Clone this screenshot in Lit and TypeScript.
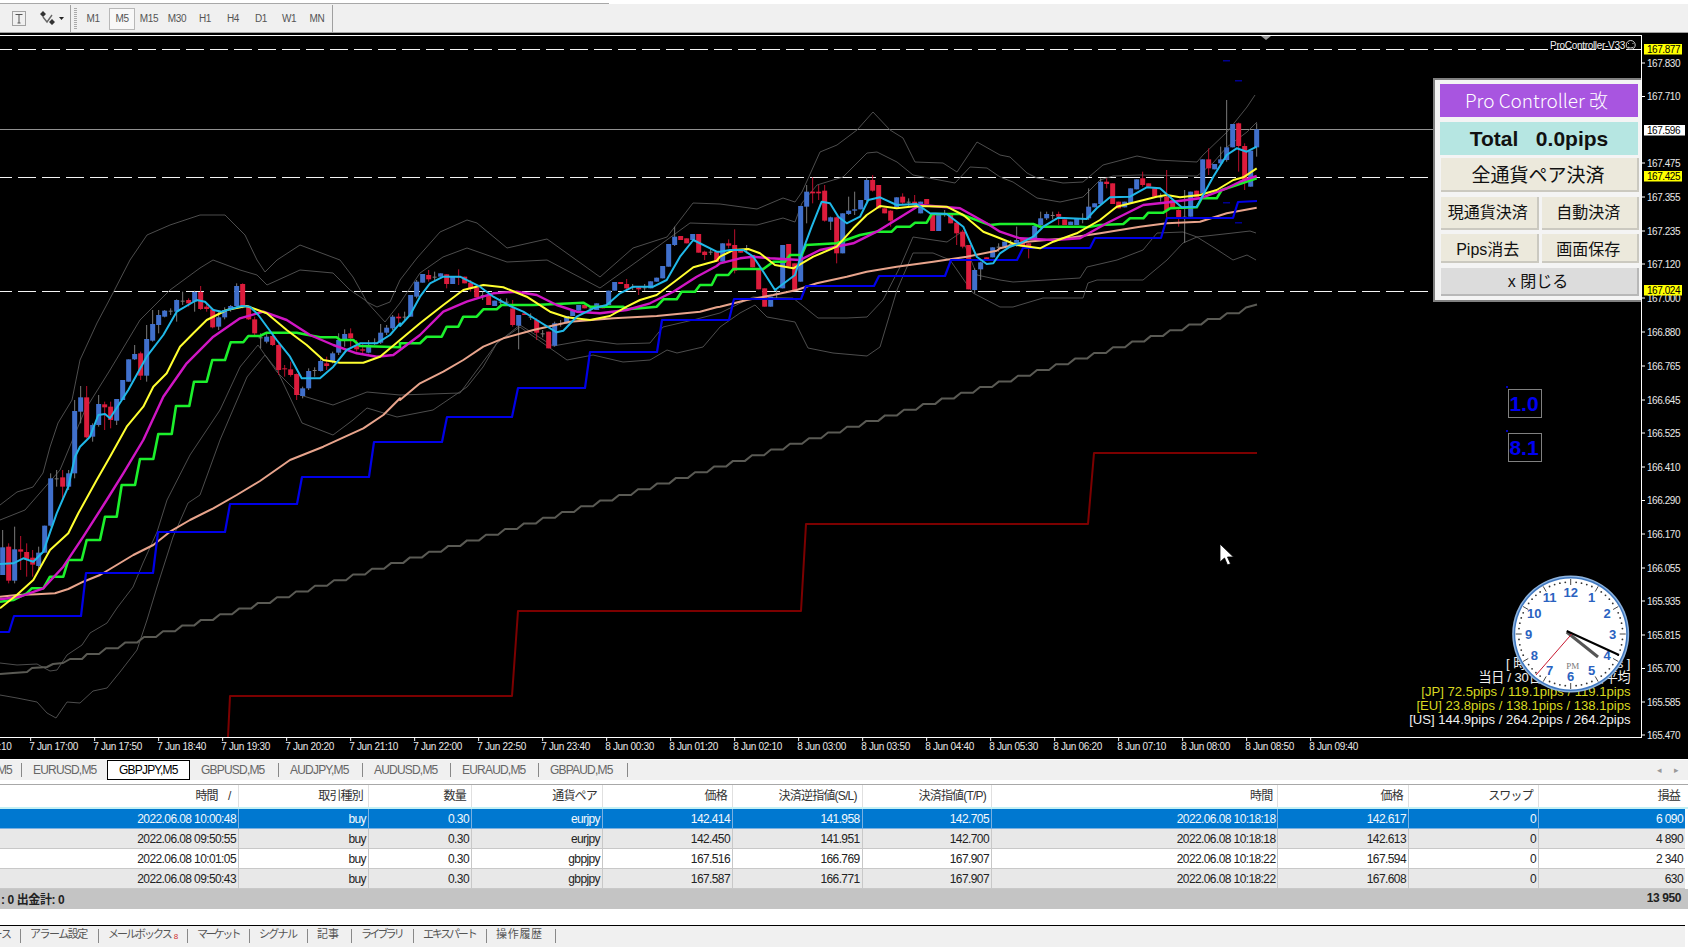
import { LitElement, html, svg, css } from 'lit';
import { customElement } from 'lit/decorators.js';

// zoom crops were read at 3x, these turn those readings back into page pixels
const ORIGINS: Record<string, [number, number, number, number]> = {
  a: [0, 260, 0, 400],
  e: [0, 480, 0, 400],
  b: [400, 180, 400, 720],
  c: [720, 100, 720, 1000],
  d: [1000, 90, 1000, 1300],
};

const seg = (key: string, s: string) => {
  const [ox, oy, min, max] = ORIGINS[key];
  return s
    .trim()
    .split(/\s+/)
    .map((p) => {
      const [x, y] = p.split(',').map(Number);
      return [ox + x / 3, oy + y / 3];
    })
    .filter(([x]) => x >= min && x <= max);
};

const pts = (list: number[][]) => list.map(([x, y]) => `${x.toFixed(1)},${y.toFixed(1)}`).join(' ');
const abs = (s: string) => s.trim().split(/\s+/).map((p) => p.split(',').map(Number));

const CYAN = [
  ...seg('a', '0,912 40,910 70,895 100,905 130,875 170,760 205,680 225,590 240,560 270,530 295,465 315,462 330,475 385,390 440,290 490,225 530,155 590,120 615,125 640,150 665,155 700,145 725,138 750,140 775,165 830,240 870,290 905,355 960,355 1000,320 1040,270 1080,250 1130,250 1170,225 1200,190'),
  ...seg('b', '0,438 30,405 60,350 90,310 130,290 180,290 240,320 280,350 330,378 370,395 410,420 470,457 490,452 530,410 580,385 620,375 660,340 700,320 760,320 800,300 840,230 880,180 950,215'),
  ...seg('c', '0,455 30,450 70,450 100,470 130,515 165,570 225,525 245,460 275,380 305,305 330,310 355,350 380,370 420,350 445,300 480,292 530,315 590,312 630,340 680,342 730,380 770,470 800,492 820,490'),
  ...seg('d', '0,490 30,470 60,460 100,440 130,410 175,383 260,387 290,355 330,322 390,320 440,292 480,295 520,330 545,352 590,350 640,260 680,195 710,175 740,185 770,170'),
];
const YELLOW = [
  ...seg('a', '0,1045 50,1005 100,960 150,870 205,820 235,760 290,660 330,590 380,500 430,440 460,380 500,340 540,260 580,220 620,180 680,150 740,138 800,160 860,210 920,255 970,300 1020,308 1090,308 1140,290 1200,240'),
  ...seg('b', '0,480 60,430 130,375 190,330 250,315 310,322 380,350 450,395 500,412 570,420 630,408 680,380 720,360 770,345 830,300 880,262 950,242'),
  ...seg('c', '0,470 40,450 85,447 120,460 165,495 220,505 280,470 350,440 400,385 440,345 480,318 530,325 590,318 680,320 730,345 790,395'),
  ...seg('d', '0,445 50,465 120,475 160,455 230,430 300,390 350,350 410,335 470,320 500,315 540,322 600,315 650,300 700,270 730,262 770,235'),
];
const MAGENTA = [
  ...seg('a', '0,1018 60,1010 130,985 190,920 250,830 320,720 370,640 430,540 490,410 560,310 640,230 720,175 790,155 860,180 930,225 1000,255 1070,280 1130,290 1180,285'),
  ...seg('b', '0,510 60,465 130,395 200,365 280,340 350,335 410,345 470,375 530,395 600,400 680,390 750,370 820,335 890,290 950,258'),
  ...seg('c', '0,490 60,475 100,470 150,475 240,480 300,450 400,430 470,395 600,315 720,325 800,370'),
  ...seg('d', '0,425 60,445 160,450 240,445 320,400 430,345 520,335 600,325 680,295 720,275 770,258'),
];
const GREEN = [
  ...seg('a', '0,1025 40,1020 80,1000 95,985 130,985 150,950 190,950 205,900 245,900 260,840 300,840 315,770 350,770 365,675 405,675 420,597 460,597 475,522 515,522 528,438 568,438 582,365 620,365 637,300 675,300 692,247 730,247 745,228 780,228 800,218 890,218 960,232 1010,232 1020,240 1060,240 1080,258 1200,262'),
  ...seg('b', '0,490 60,490 80,470 125,470 140,440 175,440 190,410 230,410 250,388 290,388 305,375 400,375 470,372 550,368 570,380 670,380 680,388 720,385 770,380 790,358 830,358 845,335 885,335 900,315 935,315 950,285'),
  ...seg('c', '0,525 25,525 40,507 130,507 160,485 195,485 210,465 245,465 258,435 350,430 420,405 470,395 515,395 530,380 570,380 585,368 620,368 635,342 720,342 810,375'),
  ...seg('d', '0,402 100,402 120,410 240,410 260,412 300,405 370,402 390,385 430,385 445,368 490,368 510,355 590,352 605,325 650,325 665,300 710,285 770,265'),
];
const SALMON = [
  ...seg('e', '0,350 50,345 110,343 165,340 205,327 250,305 300,285 350,255 400,225 460,195 510,155 570,120 640,85 710,45 780,3'),
  ...seg('a', '870,600 970,560 1090,505 1150,465 1200,415'),
  ...seg('b', '0,660 60,610 130,575 190,540 250,500 310,475 400,450 510,425 640,415 770,408 900,395 950,382'),
  ...seg('c', '0,620 80,600 160,585 230,570 290,550 380,530 440,515 530,500 640,485 740,470 830,452'),
  ...seg('d', '0,475 80,455 200,445 300,430 420,410 500,400 600,395 680,370 770,353'),
];
const BLUE = abs('0,632 9,632 14,616 81,616 86,573 153,573 158,532 225,532 230,504 297,504 302,477 369,477 374,442 442,442 447,417 512,417 518,388 585,388 590,352 657,352 662,320 729,320 734,299 801,299 806,286 874,286 879,276 945,276 951,260 1017,260 1023,248 1090,248 1095,238 1161,238 1167,218 1233,218 1238,202 1257,201');
const DARKRED = abs('228,737 230,696 512,696 518,611 801,611 806,524 1088,524 1094,453 1257,453');

const BANDS = [
  abs('0,505 17,492 33,487 43,473 50,447 58,423 72,400 80,360 97,323 113,293 130,260 147,235 170,225 200,215 225,215 245,235 257,260 265,272 277,260 300,245 340,260 353,277 367,302 377,307 390,302 400,280 417,258 440,232 467,220 477,223 507,248 547,239 600,277 633,248 667,237 693,203 720,204 757,209 783,198 795,202 802,192 820,152 837,145 857,130 873,112 890,130 903,138 915,162 943,163 957,172 977,142 1000,155 1010,157 1027,173 1037,178 1063,183 1083,182 1103,165 1137,156 1157,160 1197,162 1203,155 1227,132 1247,107 1255,95'),
  abs('0,520 25,510 60,470 85,410 110,370 140,320 170,290 200,268 213,260 240,270 257,275 267,285 300,270 333,273 350,290 365,300 385,322 400,303 420,273 443,257 467,248 507,262 547,260 600,288 653,250 690,223 720,224 757,225 783,218 795,222 802,203 817,185 843,177 867,153 877,152 897,162 913,175 955,183 970,167 987,168 1000,177 1013,182 1037,198 1060,202 1083,197 1100,180 1113,176 1140,175 1197,176 1213,163 1227,147 1247,132 1257,122'),
  abs('0,663 17,665 37,664 50,671 57,670 67,655 82,645 90,633 107,623 117,608 133,587 143,563 157,532 167,500 190,455 220,410 240,367 258,345 277,372 300,395 333,405 367,392 400,395 460,393 497,343 520,325 553,346 587,340 617,344 650,343 663,327 693,320 720,313 753,297 793,298 818,318 847,318 867,317 883,300 900,267 913,237 947,242 960,233 977,275 1000,280 1013,282 1080,278 1087,267 1117,260 1143,250 1157,233 1183,232 1197,237 1233,233 1250,231 1256,233'),
  abs('0,695 17,698 37,702 47,713 56,718 67,702 80,703 93,691 107,688 120,672 137,650 147,620 157,587 173,537 188,503 200,495 220,440 247,377 265,355 277,370 302,423 333,435 353,420 367,408 397,417 433,410 467,387 483,367 497,343 520,327 567,360 593,355 623,362 650,360 667,350 677,353 703,347 720,327 740,313 755,305 767,317 795,322 808,348 833,353 867,356 880,347 897,290 913,253 933,253 950,260 973,293 1000,307 1013,307 1043,298 1083,298 1088,283 1097,280 1143,280 1167,260 1183,243 1197,237 1213,247 1233,260 1247,255 1256,260'),
];

// long moving average, drawn as a slanted staircase
const stairs = () => {
  const out = abs('0,674 13,673 27,672 32,668 47,667 53,664 63,663 70,659 82,659');
  let x = 87;
  let y = 654;
  while (x < 1238) {
    out.push([x, y], [x + 12, y], [x + 19, y - 5.68]);
    x += 19;
    y -= 5.68;
  }
  out.push([1257, y - 3]);
  return out;
};

const CANDLES: Record<string, string> = {
  a: '8 B 862 945 810 945;26 R 860 962 850 970;44 B 868 962 800 970;62 R 868 875 828 930;80 R 876 898 850 950;98 R 893 914 870 950;116 B 878 918 860 930;134 B 797 878;152 B 655 797 640 800;170 D 655 655 630 680;188 R 652 680 630 720;206 B 640 680 630 690;224 B 453 640 420 655;242 B 412 455 378 490;260 R 412 532 378 535;278 B 495 530 490 545;296 B 432 495 405 500;314 R 433 442 425 510;332 R 440 480 425 505;350 B 417 482 417 495;368 B 360 420;386 B 298 365;404 B 282 298 255 300;422 R 280 347 275 360;440 B 237 347 195 365;458 B 192 242 150 245;476 B 165 195 150 220;494 B 152 170 150 172;512 D 152 152 145 165;530 B 120 155 118 185;548 D 122 122 95 135;566 R 120 130 115 140;584 B 96 125 92 155;602 R 96 147 78 150;620 R 140 147 130 155;638 R 148 202 145 205;656 B 172 200 150 210;674 B 150 172 142 178;692 B 138 150 135 155;710 B 78 138 70 140;728 R 72 140 70 145;746 R 140 178 135 180;764 R 178 220 170 225;782 D 232 232 220 265;800 B 230 245 222 250;818 R 228 255 222 258;836 R 255 330 250 345;854 R 325 328 315 350;872 R 328 345 305 350;890 R 342 405 340 420;908 B 385 408 380 415;926 B 333 385 325 390;944 D 330 330 322 350;962 B 303 333 295 335;980 R 310 318 290 330;998 B 280 303 275 310;1016 B 240 278 220 285;1034 B 222 240 208 260;1052 R 220 235 205 260;1070 R 258 268 240 275;1088 R 268 272 250 285;1106 B 255 278 240 280;1124 D 248 248 235 255;1142 B 218 248 192 252;1160 B 203 218 195 225;1178 B 170 205 165 210;1196 R 170 175 160 190',
  b: '14 D 410 410 395 420;32 B 345 410;50 B 305 350 300 355;68 B 282 308;86 R 285 298 270 305;104 D 290 290 275 300;122 B 280 290;140 R 283 312 283 325;158 B 290 312;176 R 290 292 268 315;194 R 290 310;212 R 308 325 300 335;230 R 322 352;248 D 345 345 335 360;266 R 345 375;284 B 362 378;302 D 365 365 355 375;320 D 365 365 355 378;338 R 385 435 360 440;356 B 405 437 405 508;374 R 400 405;392 D 410 410 400 420;410 R 420 458 415 480;428 D 460 460 450 472;446 R 455 505;464 B 430 497 425 500;482 D 430 430 420 440;500 B 408 430;518 B 392 408;536 B 375 392;554 R 375 385;572 D 385 385 378 395;590 B 370 390;608 R 375 385;626 B 332 375;644 B 306 332;662 R 306 312;680 R 312 325 297 330;698 D 320 320 312 330;716 R 322 328 320 345;734 D 322 322 312 332;752 B 304 325;770 B 293 305;788 B 258 295;806 B 192 260;824 B 170 195 140 198;842 R 168 180;860 R 175 190;878 B 162 180;896 R 162 218;914 R 215 225 212 240;932 D 215 215 205 225;950 R 215 245',
  c: '8 B 430 485;26 R 430 437 418 445;44 R 435 512 388 520;62 R 452 458;80 D 445 445 435 460;98 R 465 502;116 R 505 568;134 R 565 620;152 B 590 620;170 D 580 580 570 595;188 B 435 565;206 R 432 500;224 R 490 570;242 B 318 545;260 B 275 320 255 370;278 R 275 280 232 310;296 R 275 280 255 300;314 R 272 362 255 365;332 B 352 365 350 390;350 R 352 460 350 490;368 B 340 460;386 B 332 342 290 345;404 B 328 332 275 345;422 B 300 328;440 B 240 300 232 305;458 R 240 272 225 275;476 R 255 325;494 R 325 340;512 R 332 362 330 380;530 B 292 322;548 R 290 308 280 315;566 D 305 305 295 320;584 R 305 312 285 320;602 B 305 340;620 R 297 312;638 R 340 393;656 B 340 393;674 D 340 340 330 350;692 R 345 370;710 R 368 400 365 435;728 R 395 440 390 445;746 R 435 568;764 B 510 570 505 580;782 B 487 508 485 540;800 R 472 478;818 B 442 472;836 D 440 440 430 455;854 B 425 440;872 D 432 432 420 442;890 B 420 435 380 440;908 R 415 440;926 R 430 445 428 475;944 B 378 415;962 B 355 375 335 380;980 B 342 355 335 360;998 D 345 345 335 358;1016 R 342 350 335 375;1034 R 358 375;1052 B 365 375;1070 B 355 375;1088 D 355 355 340 370;1106 B 320 355 265 360;1124 B 310 322;1142 B 245 312 235 315;1160 R 245 252 235 265;1178 R 250 312;1196 R 305 325;1214 B 305 322;1232 B 265 310;1250 B 238 268',
  d: '428 R 265 285 245 290;446 R 280 290;464 R 295 320;482 D 320 320 310 335;500 R 320 360 240 385;518 R 330 352;536 R 360 385 358 410;554 D 380 380 300 458;572 B 305 380;590 R 302 322;608 B 208 310;626 R 208 235 175 255;644 B 222 238;662 B 208 220 170 225;680 B 172 210 30 215;698 B 102 172;716 R 100 168 98 245;734 R 168 272 160 300;752 B 182 290;770 B 118 172 100 200',
};

const parseCandles = () => {
  const out: { x: number; t: number; b: number; h: number; l: number; c: string }[] = [];
  for (const key of Object.keys(CANDLES)) {
    const [ox, oy] = ORIGINS[key];
    for (const row of CANDLES[key].split(';')) {
      const [zx, c, t, b, h, l] = row.split(' ');
      out.push({
        x: ox + +zx / 3,
        c,
        t: oy + +t / 3,
        b: oy + +b / 3,
        h: oy + +(h ?? t) / 3,
        l: oy + +(l ?? b) / 3,
      });
    }
  }
  return out;
};

const TIME_LABELS = ['7 Jun 17:00', '7 Jun 17:50', '7 Jun 18:40', '7 Jun 19:30', '7 Jun 20:20', '7 Jun 21:10', '7 Jun 22:00', '7 Jun 22:50', '7 Jun 23:40', '8 Jun 00:30', '8 Jun 01:20', '8 Jun 02:10', '8 Jun 03:00', '8 Jun 03:50', '8 Jun 04:40', '8 Jun 05:30', '8 Jun 06:20', '8 Jun 07:10', '8 Jun 08:00', '8 Jun 08:50', '8 Jun 09:40'];

const PRICES: [string, number][] = [['167.830', 63], ['167.710', 96.5], ['167.475', 163], ['167.355', 197], ['167.235', 231], ['167.120', 264], ['167.000', 298], ['166.880', 332], ['166.765', 366], ['166.645', 400], ['166.525', 433], ['166.410', 467], ['166.290', 500.5], ['166.170', 534], ['166.055', 568], ['165.935', 601], ['165.815', 635], ['165.700', 668.5], ['165.585', 702], ['165.470', 735]];

const TIMEFRAMES = ['M1', 'M5', 'M15', 'M30', 'H1', 'H4', 'D1', 'W1', 'MN'];

const CHART_TABS = [
  { label: 'M5', w: 22, first: true },
  { label: 'EURUSD,M5', w: 85, noSep: true },
  { label: 'GBPJPY,M5', w: 83, active: true },
  { label: 'GBPUSD,M5', w: 89 },
  { label: 'AUDJPY,M5', w: 84 },
  { label: 'AUDUSD,M5', w: 88 },
  { label: 'EURAUD,M5', w: 88 },
  { label: 'GBPAUD,M5', w: 89 },
];

const BOTTOM_TABS = [
  { label: 'ース', w: 21, ls: -1, first: true },
  { label: 'アラーム設定', w: 78, ls: -1.5 },
  { label: 'メールボックス', w: 89, ls: -2, badge: '8' },
  { label: 'マーケット', w: 62, ls: -2.6 },
  { label: 'シグナル', w: 58, ls: -1.7 },
  { label: '記事', w: 44, ls: 0 },
  { label: 'ライブラリ', w: 62, ls: -2.8 },
  { label: 'エキスパート', w: 73, ls: -2.2 },
  { label: '操作履歴', w: 69, ls: 0.7 },
];

const HEAD = ['時間', '取引種別', '数量', '通貨ペア', '価格', '決済逆指値(S/L)', '決済指値(T/P)', '時間', '価格', 'スワップ', '損益'];
const ROWS = [
  ['2022.06.08 10:00:48', 'buy', '0.30', 'eurjpy', '142.414', '141.958', '142.705', '2022.06.08 10:18:18', '142.617', '0', '6 090'],
  ['2022.06.08 09:50:55', 'buy', '0.30', 'eurjpy', '142.450', '141.951', '142.700', '2022.06.08 10:18:18', '142.613', '0', '4 890'],
  ['2022.06.08 10:01:05', 'buy', '0.30', 'gbpjpy', '167.516', '166.769', '167.907', '2022.06.08 10:18:22', '167.594', '0', '2 340'],
  ['2022.06.08 09:50:43', 'buy', '0.30', 'gbpjpy', '167.587', '166.771', '167.907', '2022.06.08 10:18:22', '167.608', '0', '630'],
];

@customElement('app-root')
export class AppRoot extends LitElement {
  static styles = css`
    :host {
      display: block;
      width: 1688px;
      height: 949px;
      overflow: hidden;
      background: #fff;
      font-family: 'Liberation Sans', 'Noto Sans CJK JP', sans-serif;
      font-size: 12px;
      color: #222;
    }
    .topstrip {
      height: 4px;
      display: flex;
      background: #fff;
    }
    .toolbar {
      height: 27px;
      display: flex;
      align-items: center;
      background: #f0f0f0;
      border-top: 1px solid #f0f0f0;
      border-bottom: 1px solid #a0a0a0;
      box-sizing: content-box;
      position: relative;
    }
    .topline {
      width: 609px;
      height: 1px;
      background: #a8a8a8;
      margin-top: 3px;
    }
    .tools {
      width: 71px;
      height: 100%;
      display: flex;
      align-items: center;
      padding-left: 12px;
      gap: 14px;
      box-sizing: border-box;
      border-right: 1px solid #a0a0a0;
    }
    .grip {
      width: 3px;
      height: 22px;
      margin: 0 2px 0 3px;
      background: repeating-linear-gradient(#aaa 0 1px, transparent 1px 2px);
    }
    .tf {
      width: 28px;
      height: 22px;
      display: flex;
      align-items: center;
      justify-content: center;
      font-size: 10px;
      letter-spacing: -0.4px;
      color: #555;
      box-sizing: border-box;
    }
    .tf.on {
      border: 1px solid #b8b8b8;
      background: #f8f8f8;
      margin-left: 2px;
      width: 26px;
    }
    .tfend {
      width: 1px;
      height: 100%;
      background: #a0a0a0;
      margin-left: 1px;
    }
    .chart {
      position: relative;
      height: 726px;
      background: #000;
    }
    .chart svg {
      display: block;
    }
    .band {
      fill: none;
      stroke: #565656;
      stroke-width: 0.9;
    }
    .line {
      fill: none;
      stroke-linejoin: round;
    }
    .axis-text {
      fill: #e8e8e8;
      font-size: 10px;
      letter-spacing: -0.45px;
    }
    .time-text {
      fill: #e8e8e8;
      font-size: 10px;
      letter-spacing: -0.3px;
    }
    .mark-text {
      fill: #000;
      font-size: 10px;
      letter-spacing: -0.45px;
    }
    .stat {
      font-size: 13.1px;
      text-anchor: end;
      fill: #f0f0f0;
    }
    .stat.y {
      fill: #d8d820;
    }
    .stat.tight {
      letter-spacing: -0.2px;
    }
    .num {
      font-size: 13px;
      font-weight: 700;
      fill: #2a62c0;
      text-anchor: middle;
    }
    .lot {
      font-size: 21px;
      font-weight: 700;
      fill: #0000f0;
      text-anchor: middle;
    }
    .panel {
      position: absolute;
      left: 1433px;
      top: 45px;
      width: 208px;
      height: 224px;
      box-sizing: border-box;
      padding: 4px 2px 0 5px;
      background: #f4f4f4;
      border: 2px solid #808080;
      border-right: 0;
      display: flex;
      flex-direction: column;
      color: #111;
      font-size: 16px;
    }
    .title,
    .total,
    .btn {
      display: flex;
      align-items: center;
      justify-content: center;
      box-sizing: border-box;
    }
    .title {
      height: 33px;
      margin-right: 1px;
      padding: 0 5px 3px 0;
      background: #a855e0;
      color: #fff;
      font-size: 19px;
      font-weight: 300;
      font-family: 'Noto Sans CJK JP', sans-serif;
    }
    .total {
      height: 33px;
      margin: 5px 1px 3px 0;
      background: #b6e6e2;
      font-family: 'Liberation Sans', sans-serif;
      font-size: 21px;
      font-weight: 700;
      white-space: pre;
    }
    .btn {
      flex: 1;
      margin-left: 1px;
      padding-right: 2px;
      background: #ece9dc;
      border-right: 2px solid #cbc9c0;
      border-bottom: 2px solid #cbc9c0;
    }
    .btn.big {
      flex: none;
      height: 34px;
      padding-bottom: 2px;
      font-size: 19px;
    }
    .pair {
      display: flex;
      gap: 2px;
    }
    .pair.r1 {
      height: 33px;
      margin-top: 5px;
    }
    .pair.r1 .btn {
      padding-bottom: 3px;
    }
    .pair.r2 {
      height: 29px;
      margin-top: 4px;
    }
    .btn.close {
      flex: none;
      height: 28px;
      margin-top: 5px;
      padding-bottom: 3px;
      background: #dcdcdc;
      border-color: #b8b8b8;
    }
    .tabs {
      display: flex;
      height: 20px;
      margin-top: 1px;
      background: #f0f0f0;
      color: #666;
      position: relative;
    }
    .tab {
      height: 20px;
      display: flex;
      align-items: center;
      box-sizing: border-box;
      padding-left: 11px;
      white-space: nowrap;
      letter-spacing: -0.8px;
      position: relative;
    }
    .tab::after {
      content: '';
      position: absolute;
      right: 0;
      top: 3px;
      bottom: 3px;
      width: 1px;
      background: #888;
    }
    .tab.first {
      padding-left: 0;
      justify-content: flex-end;
      padding-right: 10px;
      overflow: hidden;
    }
    .tab.nosep::after {
      display: none;
    }
    .tab.active {
      color: #000;
      background: #fff;
      border: 1px solid #000;
      padding-left: 11px;
    }
    .tab.active::after {
      display: none;
    }
    .tabarrows {
      margin-left: auto;
      display: flex;
      gap: 12px;
      padding-right: 9px;
      align-items: center;
      color: #999;
      font-size: 9px;
    }
    .table {
      margin-top: 4px;
      border-top: 1px solid #a8a8a8;
    }
    .row {
      display: grid;
      grid-template-columns: 239px 130px 103px 131px 130px 129.6px 129.4px 286.5px 130.5px 130px 146px 3px;
      height: 20px;
      box-sizing: border-box;
    }
    .row.head {
      height: 24px;
      border-bottom: 2px solid #c4f0f4;
    }
    .cell {
      text-align: right;
      padding-right: 2px;
      line-height: 21px;
      height: 20px;
      box-sizing: border-box;
      border-right: 1px solid #c8c8c8;
      border-bottom: 1px solid #c8c8c8;
      letter-spacing: -0.6px;
      white-space: nowrap;
    }
    .head .cell {
      height: 22px;
      border-bottom: 0;
      border-right-color: #e0e0e0;
      padding-right: 5px;
      line-height: 23px;
      letter-spacing: -0.8px;
      color: #333;
    }
    .sel .cell {
      background: #0078d0;
      color: #f4f8fc;
      border-color: #7ab0e0;
    }
    .alt .cell {
      background: #e8e8e8;
    }
    .cell:nth-child(11) {
      border-right: 0;
    }
    .sum {
      height: 20px;
      box-sizing: border-box;
      display: flex;
      justify-content: space-between;
      align-items: center;
      padding: 0 7px 2px 1px;
      background: #c4c4c4;
      font-weight: 700;
      letter-spacing: -0.4px;
    }
    .gap {
      height: 16px;
    }
    .bottom {
      display: flex;
      height: 22px;
      box-sizing: border-box;
      margin-right: 3px;
      border-top: 1px solid #000;
      background: #f0f0f0;
      color: #555;
    }
    .bottom .tab {
      height: 21px;
      font-size: 11px;
      padding-left: 9px;
      padding-bottom: 7px;
    }
    .bottom .tab::after {
      top: 3px;
      bottom: 4px;
    }
    .bottom .tab.first {
      padding-left: 0;
    }
    .badge {
      font-size: 8px;
      color: #d03030;
      margin: 6px 0 0 3px;
      letter-spacing: 0;
    }
    .fill {
      flex: 1;
    }
  `;

  private renderCandles() {
    return parseCandles().map((k) => {
      const wick = k.c === 'R' ? '#b8102c' : '#7a7a7a';
      const body = k.c === 'R' ? '#dc1c3c' : k.c === 'B' ? '#4070cc' : '#7a7a7a';
      const h = Math.max(k.b - k.t, 1);
      const w = k.c === 'D' ? 4 : 5;
      return svg`<line x1=${k.x} x2=${k.x} y1=${k.h} y2=${k.l} stroke=${wick} stroke-width="1"></line>
        <rect x=${k.x - w / 2} y=${k.t} width=${w} height=${h} fill=${body}></rect>`;
    });
  }

  private renderClock() {
    const cx = 1570.7;
    const cy = 634;
    const nums = [12, 1, 2, 3, 4, 5, 6, 7, 8, 9, 10, 11];
    const ticks = Array.from({ length: 60 }, (_, i) => {
      const a = (i * Math.PI) / 30;
      const s = Math.sin(a);
      const c = Math.cos(a);
      if (i % 5 === 0) {
        return svg`<line x1=${cx + 49 * s} y1=${cy - 49 * c} x2=${cx + 55 * s} y2=${cy - 55 * c} stroke="#444" stroke-width="1"></line>`;
      }
      return svg`<circle cx=${cx + 52 * s} cy=${cy - 52 * c} r="0.9" fill="#333"></circle>`;
    });
    return svg`
      <circle cx=${cx} cy=${cy} r="58.5" fill="#8fb4de"></circle>
      <circle cx=${cx} cy=${cy} r="57" fill="#3f78c0"></circle>
      <circle cx=${cx} cy=${cy} r="55.5" fill="#fff"></circle>
      ${ticks}
      ${nums.map((n, i) => {
        const a = (i * Math.PI) / 6;
        return svg`<text class="num" x=${cx + 42 * Math.sin(a)} y=${cy - 42 * Math.cos(a) + 4.5}>${n}</text>`;
      })}
      <text x="1572.7" y="669" text-anchor="middle" font-family="Liberation Serif, serif" font-size="9" fill="#777">PM</text>
      <line x1=${cx - 4} y1=${cy - 2} x2="1598" y2="657" stroke="#555" stroke-width="3"></line>
      <line x1=${cx - 4} y1=${cy - 3} x2="1619" y2="655" stroke="#000" stroke-width="2"></line>
      <line x1=${cx + 1} y1=${cy} x2="1536" y2="675" stroke="#c81830" stroke-width="1"></line>
    `;
  }

  private renderChart() {
    return html`<svg width="1688" height="726" viewBox="0 33 1688 726" font-family="Liberation Sans, Noto Sans CJK JP, sans-serif">
      <rect x="0" y="35" width="1642" height="1" fill="#fff"></rect>
      <rect x="1641" y="35" width="1" height="703" fill="#fff"></rect>
      <rect x="0" y="737" width="1642" height="1" fill="#fff"></rect>
      <path d="M1261 36h10l-5 4z" fill="#9a9a9a"></path>

      ${[49.5, 177.5, 291.5].map(
        (y) => svg`<line x1="0" x2="1641" y1=${y} y2=${y} stroke="#f4f4f4" stroke-width="1" stroke-dasharray="18 6" stroke-dashoffset="6"></line>`,
      )}
      <line x1="0" x2="1641" y1="129.5" y2="129.5" stroke="#909090" stroke-width="1"></line>

      ${BANDS.map((b) => svg`<polyline class="band" points=${pts(b)}></polyline>`)}
      <polyline class="line" points=${pts(DARKRED)} stroke="#7c0000" stroke-width="2"></polyline>
      <polyline class="line" points=${pts(stairs())} stroke="#5a5a54" stroke-width="2"></polyline>
      ${this.renderCandles()}
      <polyline class="line" points=${pts(SALMON)} stroke="#e8a48c" stroke-width="2"></polyline>
      <polyline class="line" points=${pts(BLUE)} stroke="#0000e8" stroke-width="2.2"></polyline>
      <polyline class="line" points=${pts(GREEN)} stroke="#1cf02c" stroke-width="2.6"></polyline>
      <polyline class="line" points=${pts(MAGENTA)} stroke="#d016c4" stroke-width="2.4"></polyline>
      <polyline class="line" points=${pts(YELLOW)} stroke="#ffff30" stroke-width="2"></polyline>
      <polyline class="line" points=${pts(CYAN)} stroke="#20b8e8" stroke-width="2"></polyline>
      <rect x="1223" y="60" width="7" height="1.5" fill="#000090"></rect>
      <rect x="1235" y="80" width="7" height="1.5" fill="#000090"></rect>
      <rect x="1223" y="202" width="7" height="1.5" fill="#000090"></rect>
      <rect x="1235" y="222" width="7" height="1.5" fill="#000090"></rect>

      <text x="1625" y="48.5" text-anchor="end" font-size="10" letter-spacing="-0.3" fill="#f0f0f0">ProController-V33</text>
      <circle cx="1630.7" cy="45" r="4.5" fill="none" stroke="#ccc" stroke-width="1"></circle>
      <path d="M1628 47c1 1.300 4 1.300 5.400 0" fill="none" stroke="#ccc"></path>
      <rect x="1628" y="43" width="1" height="1" fill="#ccc"></rect>
      <rect x="1632.5" y="43" width="1" height="1" fill="#ccc"></rect>

      <rect x="1508.5" y="389.5" width="33" height="28" fill="none" stroke="#808080"></rect>
      <rect x="1508.5" y="433.5" width="33" height="28" fill="none" stroke="#808080"></rect>
      <rect x="1506" y="386" width="2" height="2" fill="#0000c0"></rect>
      <rect x="1506" y="430" width="2" height="2" fill="#0000c0"></rect>
      <text class="lot" x="1524" y="411">1.0</text>
      <text class="lot" x="1524" y="455">8.1</text>

      <text class="stat" x="1630.5" y="668">[ 時間帯別 値幅 pips ]</text>
      <text class="stat tight" x="1630.5" y="682">当日 / 30日平均 / 90日平均</text>
      <text class="stat y" x="1630.5" y="696">[JP] 72.5pips / 119.1pips / 119.1pips</text>
      <text class="stat y" x="1630.5" y="710">[EU] 23.8pips / 138.1pips / 138.1pips</text>
      <text class="stat" x="1630.5" y="724">[US] 144.9pips / 264.2pips / 264.2pips</text>
      ${this.renderClock()}

      <path d="M1220 544v18l4.500-4 3 7 3-1.300-3-6.700h6z" fill="#fff" stroke="#000" stroke-width="0.8"></path>

      ${PRICES.map(
        ([p, y]) => svg`<line x1="1642" x2="1645" y1=${y} y2=${y} stroke="#fff"></line>
          <text class="axis-text" x="1647" y=${y + 3.5}>${p}</text>`,
      )}
      ${[['167.877', 44, '#ffff00'], ['167.425', 171, '#ffff00'], ['167.024', 285, '#ffff00']].map(
        ([p, y, c]) => svg`<rect x="1644" y=${y} width="38" height="10.5" fill=${c as string}></rect>
          <text class="mark-text" x="1647" y=${(y as number) + 9}>${p}</text>`,
      )}
      <rect x="1644" y="125" width="41" height="10.5" fill="#fff"></rect>
      <text class="mark-text" x="1647" y="134">167.596</text>

      <text class="time-text" x="-12" y="750">16:10</text>
      ${TIME_LABELS.map((t, i) => {
        const x = 30.67 + 64 * i;
        return svg`<line x1=${x} x2=${x} y1="738" y2="741" stroke="#fff"></line>
          <text class="time-text" x=${x - 1.5} y="750">${t}</text>`;
      })}
    </svg>`;
  }

  render() {
    return html`
      <div class="topstrip"><div class="topline"></div></div>
      <div class="toolbar">
        <div class="tools">
          <svg width="14" height="15" viewBox="0 0 14 15">
            <rect x="0.5" y="0.5" width="13" height="14" fill="none" stroke="#555" stroke-dasharray="1 1"></rect>
            <path d="M3.5 3.5h7M7 3.5v8.5M5.5 12h3" fill="none" stroke="#555"></path>
          </svg>
          <svg width="24" height="16" viewBox="0 0 24 16">
            <path d="M3 0l3 3-3 3-3-3zM12 8l3 3-3 3-3-3z" fill="#333"></path>
            <path d="M3 6l4 5 5-7" fill="none" stroke="#666" stroke-width="1.4"></path>
            <path d="M19 6h5l-2.500 3z" fill="#222"></path>
          </svg>
        </div>
        <div class="grip"></div>
        ${TIMEFRAMES.map((t) => html`<div class="tf ${t === 'M5' ? 'on' : ''}">${t}</div>`)}
        <div class="tfend"></div>
      </div>

      <div class="chart">
        ${this.renderChart()}
        <div class="panel">
          <div class="title">Pro Controller 改</div>
          <div class="total">Total   0.0pips</div>
          <div class="btn big">全通貨ペア決済</div>
          <div class="pair r1"><div class="btn">現通貨決済</div><div class="btn">自動決済</div></div>
          <div class="pair r2"><div class="btn">Pips消去</div><div class="btn">画面保存</div></div>
          <div class="btn close">x 閉じる</div>
        </div>
      </div>

      <div class="tabs">
        ${CHART_TABS.map(
          (t) => html`<div
            class="tab ${t.first ? 'first' : ''} ${t.active ? 'active' : ''} ${t.noSep ? 'nosep' : ''}"
            style="width:${t.w}px"
          >
            ${t.label}
          </div>`,
        )}
        <div class="tabarrows"><span>◂</span><span>▸</span></div>
      </div>

      <div class="table">
        <div class="row head">
          ${HEAD.map((h, i) => html`<div class="cell">${h}${i === 0 ? html`&nbsp;&nbsp;&nbsp;&nbsp;/&nbsp;` : ''}</div>`)}
        </div>
        ${ROWS.map(
          (r, i) => html`<div class="row ${i === 0 ? 'sel' : ''} ${i % 2 === 1 ? 'alt' : ''}">
            ${r.map((c) => html`<div class="cell">${c}</div>`)}
          </div>`,
        )}
        <div class="sum"><span>: 0 出金計: 0</span><span>13 950</span></div>
      </div>
      <div class="gap"></div>

      <div class="bottom">
        ${BOTTOM_TABS.map(
          (t) => html`<div
            class="tab ${t.first ? 'first' : ''}"
            style="width:${t.w}px;letter-spacing:${t.ls}px"
          >
            ${t.label}${t.badge ? html`<span class="badge">${t.badge}</span>` : ''}
          </div>`,
        )}
        <div class="fill"></div>
      </div>
    `;
  }
}
